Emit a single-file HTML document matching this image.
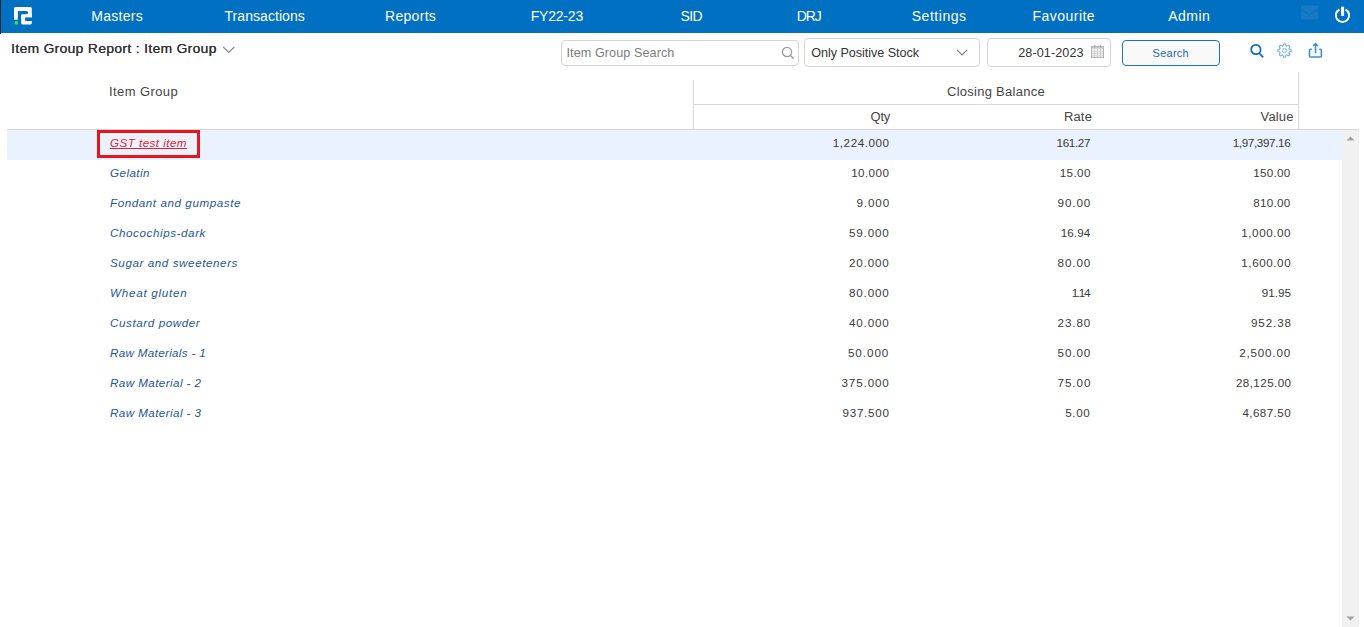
<!DOCTYPE html>
<html><head><meta charset="utf-8">
<style>
*{margin:0;padding:0;box-sizing:border-box}
html,body{width:1364px;height:627px;overflow:hidden;background:#fff;font-family:"Liberation Sans",sans-serif}
.t{position:absolute;white-space:nowrap}
.a{position:absolute}
</style></head><body>
<div class="a" style="left:0;top:0;width:1364px;height:33px;background:#0070c2"></div>
<div class="a" style="left:0;top:0;width:1px;height:34px;background:#23282e"></div>
<svg class="a" style="left:0;top:0" width="40" height="33" viewBox="0 0 40 33">
<rect x="14" y="7.1" width="17.8" height="10.3" rx="1.4" fill="#fff"/>
<rect x="14" y="10" width="3.85" height="9.7" fill="#fff"/>
<rect x="21.1" y="14.3" width="10.7" height="10.2" rx="1.4" fill="#fff"/>
<rect x="21.1" y="14.3" width="10.7" height="5" fill="#fff"/>
<path d="M17.85 10.9 H26.4 a1.7 1.7 0 0 1 0 3.4 H22.4 a1.3 1.3 0 0 0 -1.3 1.3 V25.5 H17.85 Z" fill="#0070c2"/>
<rect x="25.1" y="17.4" width="7.5" height="3.6" fill="#0070c2"/>
<circle cx="16.3" cy="22.8" r="1.9" fill="#3fe040"/>
</svg>
<div class="t" style="top:7.25px;height:18px;line-height:18px;font-size:14px;color:#fff;letter-spacing:0.3px;left:91.2px;">Masters</div>
<div class="t" style="top:7.25px;height:18px;line-height:18px;font-size:14px;color:#fff;letter-spacing:0.055px;left:224.5px;">Transactions</div>
<div class="t" style="top:7.25px;height:18px;line-height:18px;font-size:14px;color:#fff;letter-spacing:0.3px;left:385.0px;">Reports</div>
<div class="t" style="top:7.25px;height:18px;line-height:18px;font-size:14px;color:#fff;letter-spacing:-0.2px;left:530.7px;">FY22-23</div>
<div class="t" style="top:7.25px;height:18px;line-height:18px;font-size:14px;color:#fff;letter-spacing:-0.6px;left:680.6px;">SID</div>
<div class="t" style="top:7.25px;height:18px;line-height:18px;font-size:14px;color:#fff;letter-spacing:-1.15px;left:796.8000000000001px;">DRJ</div>
<div class="t" style="top:7.25px;height:18px;line-height:18px;font-size:14px;color:#fff;letter-spacing:0.543px;left:911.7px;">Settings</div>
<div class="t" style="top:7.25px;height:18px;line-height:18px;font-size:14px;color:#fff;letter-spacing:0.463px;left:1032.6000000000001px;">Favourite</div>
<div class="t" style="top:7.25px;height:18px;line-height:18px;font-size:14px;color:#fff;letter-spacing:0.5px;left:1168.2px;">Admin</div>
<svg class="a" style="left:1300px;top:5px" width="20" height="16" viewBox="0 0 20 16">
<rect x="1" y="0.4" width="17.1" height="14.1" rx="1.2" fill="#1679c6"/>
<path d="M1.2 4 L9.3 10.3 L17.9 4" stroke="#0e72c2" stroke-width="1.3" fill="none"/>
</svg>
<svg class="a" style="left:1332px;top:5px" width="22" height="22" viewBox="0 0 22 22">
<path d="M7.4 4.5 A6.6 6.6 0 1 0 13.6 4.5" stroke="#fff" stroke-width="2" fill="none"/>
<rect x="9" y="1.7" width="3.1" height="9.2" fill="#fff"/>
</svg>
<div class="t" style="top:40.20px;height:17px;line-height:17px;font-size:13px;color:#333;letter-spacing:0.35px;left:10.9px;transform:scaleX(1.06);transform-origin:0 0;text-shadow:0.25px 0 0 #333;">Item Group Report : Item Group</div>
<svg class="a" style="left:222px;top:45px" width="14" height="10" viewBox="0 0 14 10">
<path d="M1.3 2 L6.8 7.5 L12.3 2" stroke="#8a8a8a" stroke-width="1.2" fill="none"/>
</svg>
<div class="a" style="left:561px;top:40px;width:237.5px;height:26px;border:1px solid #d4d4d4;border-radius:4px"></div>
<div class="t" style="top:44.73px;height:16px;line-height:16px;font-size:12.6px;color:#7d7d7d;letter-spacing:0.088px;left:566.5px;">Item Group Search</div>
<svg class="a" style="left:780px;top:45px" width="16" height="16" viewBox="0 0 16 16">
<circle cx="7" cy="7" r="4.6" stroke="#9a9a9a" stroke-width="1.3" fill="none"/>
<path d="M10.3 10.3 L13.5 13.5" stroke="#9a9a9a" stroke-width="1.4"/>
</svg>
<div class="a" style="left:804px;top:38px;width:176px;height:29px;border:1px solid #d4d4d4;border-radius:4px"></div>
<div class="t" style="top:44.73px;height:16px;line-height:16px;font-size:12.6px;color:#333;letter-spacing:-0.039px;left:811.2px;">Only Positive Stock</div>
<svg class="a" style="left:955px;top:47px" width="14" height="10" viewBox="0 0 14 10">
<path d="M2 3 L7 8 L12 3" stroke="#888" stroke-width="1.2" fill="none"/>
</svg>
<div class="a" style="left:987px;top:38px;width:124px;height:29px;border:1px solid #d4d4d4;border-radius:4px"></div>
<div class="t" style="top:44.73px;height:16px;line-height:16px;font-size:12.6px;color:#333;letter-spacing:0.1px;right:280.40px;text-align:right;">28-01-2023</div>
<svg class="a" style="left:1090px;top:44px" width="15" height="15" viewBox="0 0 15 15">
<rect x="1.5" y="2.5" width="12" height="11" fill="#fbfbfb" stroke="#b4b4b4" stroke-width="1"/>
<rect x="1.5" y="2.5" width="12" height="2.2" fill="#c4c4c4"/>
<path d="M2 7.3h11M2 9.6h11M2 11.9h11M4.6 5v8.5M7.5 5v8.5M10.4 5v8.5" stroke="#c9c9c9" stroke-width="0.9"/>
<rect x="4" y="1" width="1.2" height="2.5" fill="#aaa"/><rect x="9.8" y="1" width="1.2" height="2.5" fill="#aaa"/>
</svg>
<div class="a" style="left:1122px;top:40px;width:98px;height:26px;border:1.5px solid #1a72c4;border-radius:4px;background:#f9f9f9"></div>
<div class="t" style="top:45.79px;height:15px;line-height:15px;font-size:11px;color:#2869b3;letter-spacing:0.26px;left:970.8px;width:400px;text-align:center;">Search</div>
<svg class="a" style="left:1248px;top:42px" width="18" height="18" viewBox="0 0 18 18">
<circle cx="7.9" cy="7.5" r="4.7" stroke="#0b6bc0" stroke-width="1.7" fill="none"/>
<path d="M11.2 11 L15.1 15.3" stroke="#0b6bc0" stroke-width="1.8"/>
</svg>
<svg class="a" style="left:1275px;top:41px" width="19" height="19" viewBox="0 0 19 19">
<path id="gear" fill="none" stroke="#78b3e8" stroke-width="1.15" stroke-linejoin="round" d="M7.70 5.16 L8.71 2.80 L10.29 2.80 L11.30 5.16 L13.68 4.20 L14.80 5.32 L13.84 7.70 L16.20 8.71 L16.20 10.29 L13.84 11.30 L14.80 13.68 L13.68 14.80 L11.30 13.84 L10.29 16.20 L8.71 16.20 L7.70 13.84 L5.32 14.80 L4.20 13.68 L5.16 11.30 L2.80 10.29 L2.80 8.71 L5.16 7.70 L4.20 5.32 L5.32 4.20Z"/>
<circle cx="9.5" cy="9.5" r="2.1" stroke="#86bbea" stroke-width="1" fill="none"/>
</svg>
<svg class="a" style="left:1306px;top:41px" width="19" height="19" viewBox="0 0 19 19">
<path d="M5.8 8.2 H4.8 a1.3 1.3 0 0 0 -1.3 1.3 V14.7 a1.3 1.3 0 0 0 1.3 1.3 H14.1 a1.3 1.3 0 0 0 1.3 -1.3 V9.5 a1.3 1.3 0 0 0 -1.3 -1.3 H13.2" stroke="#3d8cd8" stroke-width="1.6" fill="none"/>
<path d="M9.5 12.2 V2.8 M7.1 5 L9.5 2.6 L11.9 5" stroke="#3d8cd8" stroke-width="1.6" fill="none"/>
</svg>
<div class="t" style="top:83.64px;height:16px;line-height:16px;font-size:12px;color:#444;letter-spacing:0.389px;left:108.5px;transform:scaleX(1.08);transform-origin:0 0;">Item Group</div>
<div class="a" style="left:693px;top:80px;width:1px;height:49px;background:#d8d8d8"></div>
<div class="a" style="left:1298px;top:72px;width:1px;height:57px;background:#d8d8d8"></div>
<div class="a" style="left:693px;top:104px;width:605px;height:1px;background:#d8d8d8"></div>
<div class="t" style="top:83.54px;height:16px;line-height:16px;font-size:12px;color:#444;letter-spacing:0.261px;left:796px;width:400px;text-align:center;transform:scaleX(1.08);transform-origin:50% 0;">Closing Balance</div>
<div class="t" style="top:108.64px;height:16px;line-height:16px;font-size:12px;color:#444;letter-spacing:-0.194px;right:474.21px;text-align:right;transform:scaleX(1.08);transform-origin:100% 0;">Qty</div>
<div class="t" style="top:108.64px;height:16px;line-height:16px;font-size:12px;color:#444;letter-spacing:0.179px;right:271.51px;text-align:right;transform:scaleX(1.08);transform-origin:100% 0;">Rate</div>
<div class="t" style="top:108.64px;height:16px;line-height:16px;font-size:12px;color:#444;letter-spacing:0.139px;right:70.35px;text-align:right;transform:scaleX(1.08);transform-origin:100% 0;">Value</div>
<div class="a" style="left:7px;top:129px;width:1352px;height:1px;background:#d6d6d6"></div>
<div class="a" style="left:7px;top:130px;width:1335px;height:30px;background:#e9f2fe"></div>
<div class="a" style="left:97px;top:130px;width:103px;height:28px;border:3px solid #e8141c"></div>
<div class="t" style="top:136.26px;height:14px;line-height:14px;font-size:10.8px;color:#ee1c24;letter-spacing:0.41px;font-style:italic;left:109.5px;transform:scaleX(1.08);transform-origin:0 0;text-decoration:underline;">GST test item</div>
<div class="t" style="top:136.26px;height:14px;line-height:14px;font-size:10.8px;color:#3a3a3a;letter-spacing:0.514px;right:474.64px;text-align:right;transform:scaleX(1.08);transform-origin:100% 0;">1,224.000</div>
<div class="t" style="top:136.26px;height:14px;line-height:14px;font-size:10.8px;color:#3a3a3a;letter-spacing:-0.326px;right:274.15px;text-align:right;transform:scaleX(1.08);transform-origin:100% 0;">161.27</div>
<div class="t" style="top:136.26px;height:14px;line-height:14px;font-size:10.8px;color:#3a3a3a;letter-spacing:-0.341px;right:73.77px;text-align:right;transform:scaleX(1.08);transform-origin:100% 0;">1,97,397.16</div>
<div class="t" style="top:166.26px;height:14px;line-height:14px;font-size:10.8px;color:#1f5896;letter-spacing:0.382px;font-style:italic;left:109.5px;transform:scaleX(1.08);transform-origin:0 0;">Gelatin</div>
<div class="t" style="top:166.26px;height:14px;line-height:14px;font-size:10.8px;color:#3a3a3a;letter-spacing:0.378px;right:474.79px;text-align:right;transform:scaleX(1.08);transform-origin:100% 0;">10.000</div>
<div class="t" style="top:166.26px;height:14px;line-height:14px;font-size:10.8px;color:#3a3a3a;letter-spacing:0.352px;right:273.42px;text-align:right;transform:scaleX(1.08);transform-origin:100% 0;">15.00</div>
<div class="t" style="top:166.26px;height:14px;line-height:14px;font-size:10.8px;color:#3a3a3a;letter-spacing:0.266px;right:73.11px;text-align:right;transform:scaleX(1.08);transform-origin:100% 0;">150.00</div>
<div class="t" style="top:196.26px;height:14px;line-height:14px;font-size:10.8px;color:#1f5896;letter-spacing:0.512px;font-style:italic;left:109.5px;transform:scaleX(1.08);transform-origin:0 0;">Fondant and gumpaste</div>
<div class="t" style="top:196.26px;height:14px;line-height:14px;font-size:10.8px;color:#3a3a3a;letter-spacing:0.796px;right:474.34px;text-align:right;transform:scaleX(1.08);transform-origin:100% 0;">9.000</div>
<div class="t" style="top:196.26px;height:14px;line-height:14px;font-size:10.8px;color:#3a3a3a;letter-spacing:0.843px;right:272.89px;text-align:right;transform:scaleX(1.08);transform-origin:100% 0;">90.00</div>
<div class="t" style="top:196.26px;height:14px;line-height:14px;font-size:10.8px;color:#3a3a3a;letter-spacing:0.252px;right:73.13px;text-align:right;transform:scaleX(1.08);transform-origin:100% 0;">810.00</div>
<div class="t" style="top:226.26px;height:14px;line-height:14px;font-size:10.8px;color:#1f5896;letter-spacing:0.524px;font-style:italic;left:109.5px;transform:scaleX(1.08);transform-origin:0 0;">Chocochips-dark</div>
<div class="t" style="top:226.26px;height:14px;line-height:14px;font-size:10.8px;color:#3a3a3a;letter-spacing:0.77px;right:474.37px;text-align:right;transform:scaleX(1.08);transform-origin:100% 0;">59.000</div>
<div class="t" style="top:226.26px;height:14px;line-height:14px;font-size:10.8px;color:#3a3a3a;letter-spacing:0.028px;right:273.77px;text-align:right;transform:scaleX(1.08);transform-origin:100% 0;">16.94</div>
<div class="t" style="top:226.26px;height:14px;line-height:14px;font-size:10.8px;color:#3a3a3a;letter-spacing:0.492px;right:72.87px;text-align:right;transform:scaleX(1.08);transform-origin:100% 0;">1,000.00</div>
<div class="t" style="top:256.26px;height:14px;line-height:14px;font-size:10.8px;color:#1f5896;letter-spacing:0.525px;font-style:italic;left:109.5px;transform:scaleX(1.08);transform-origin:0 0;">Sugar and sweeteners</div>
<div class="t" style="top:256.26px;height:14px;line-height:14px;font-size:10.8px;color:#3a3a3a;letter-spacing:0.77px;right:474.37px;text-align:right;transform:scaleX(1.08);transform-origin:100% 0;">20.000</div>
<div class="t" style="top:256.26px;height:14px;line-height:14px;font-size:10.8px;color:#3a3a3a;letter-spacing:0.843px;right:272.89px;text-align:right;transform:scaleX(1.08);transform-origin:100% 0;">80.00</div>
<div class="t" style="top:256.26px;height:14px;line-height:14px;font-size:10.8px;color:#3a3a3a;letter-spacing:0.518px;right:72.84px;text-align:right;transform:scaleX(1.08);transform-origin:100% 0;">1,600.00</div>
<div class="t" style="top:286.26px;height:14px;line-height:14px;font-size:10.8px;color:#1f5896;letter-spacing:0.677px;font-style:italic;left:109.5px;transform:scaleX(1.08);transform-origin:0 0;">Wheat gluten</div>
<div class="t" style="top:286.26px;height:14px;line-height:14px;font-size:10.8px;color:#3a3a3a;letter-spacing:0.77px;right:474.37px;text-align:right;transform:scaleX(1.08);transform-origin:100% 0;">80.000</div>
<div class="t" style="top:286.26px;height:14px;line-height:14px;font-size:10.8px;color:#3a3a3a;letter-spacing:-1.235px;right:275.13px;text-align:right;transform:scaleX(1.08);transform-origin:100% 0;">1.14</div>
<div class="t" style="top:286.26px;height:14px;line-height:14px;font-size:10.8px;color:#3a3a3a;letter-spacing:0.009px;right:73.39px;text-align:right;transform:scaleX(1.08);transform-origin:100% 0;">91.95</div>
<div class="t" style="top:316.26px;height:14px;line-height:14px;font-size:10.8px;color:#1f5896;letter-spacing:0.53px;font-style:italic;left:109.5px;transform:scaleX(1.08);transform-origin:0 0;">Custard powder</div>
<div class="t" style="top:316.26px;height:14px;line-height:14px;font-size:10.8px;color:#3a3a3a;letter-spacing:0.77px;right:474.37px;text-align:right;transform:scaleX(1.08);transform-origin:100% 0;">40.000</div>
<div class="t" style="top:316.26px;height:14px;line-height:14px;font-size:10.8px;color:#3a3a3a;letter-spacing:0.843px;right:272.89px;text-align:right;transform:scaleX(1.08);transform-origin:100% 0;">23.80</div>
<div class="t" style="top:316.26px;height:14px;line-height:14px;font-size:10.8px;color:#3a3a3a;letter-spacing:0.808px;right:72.53px;text-align:right;transform:scaleX(1.08);transform-origin:100% 0;">952.38</div>
<div class="t" style="top:346.26px;height:14px;line-height:14px;font-size:10.8px;color:#1f5896;letter-spacing:0.287px;font-style:italic;left:109.5px;transform:scaleX(1.08);transform-origin:0 0;">Raw Materials - 1</div>
<div class="t" style="top:346.26px;height:14px;line-height:14px;font-size:10.8px;color:#3a3a3a;letter-spacing:0.881px;right:474.25px;text-align:right;transform:scaleX(1.08);transform-origin:100% 0;">50.000</div>
<div class="t" style="top:346.26px;height:14px;line-height:14px;font-size:10.8px;color:#3a3a3a;letter-spacing:0.843px;right:272.89px;text-align:right;transform:scaleX(1.08);transform-origin:100% 0;">50.00</div>
<div class="t" style="top:346.26px;height:14px;line-height:14px;font-size:10.8px;color:#3a3a3a;letter-spacing:0.746px;right:72.59px;text-align:right;transform:scaleX(1.08);transform-origin:100% 0;">2,500.00</div>
<div class="t" style="top:376.26px;height:14px;line-height:14px;font-size:10.8px;color:#1f5896;letter-spacing:0.375px;font-style:italic;left:109.5px;transform:scaleX(1.08);transform-origin:0 0;">Raw Material - 2</div>
<div class="t" style="top:376.26px;height:14px;line-height:14px;font-size:10.8px;color:#3a3a3a;letter-spacing:0.815px;right:474.32px;text-align:right;transform:scaleX(1.08);transform-origin:100% 0;">375.000</div>
<div class="t" style="top:376.26px;height:14px;line-height:14px;font-size:10.8px;color:#3a3a3a;letter-spacing:0.888px;right:272.84px;text-align:right;transform:scaleX(1.08);transform-origin:100% 0;">75.00</div>
<div class="t" style="top:376.26px;height:14px;line-height:14px;font-size:10.8px;color:#3a3a3a;letter-spacing:0.388px;right:72.98px;text-align:right;transform:scaleX(1.08);transform-origin:100% 0;">28,125.00</div>
<div class="t" style="top:406.26px;height:14px;line-height:14px;font-size:10.8px;color:#1f5896;letter-spacing:0.375px;font-style:italic;left:109.5px;transform:scaleX(1.08);transform-origin:0 0;">Raw Material - 3</div>
<div class="t" style="top:406.26px;height:14px;line-height:14px;font-size:10.8px;color:#3a3a3a;letter-spacing:0.66px;right:474.49px;text-align:right;transform:scaleX(1.08);transform-origin:100% 0;">937.500</div>
<div class="t" style="top:406.26px;height:14px;line-height:14px;font-size:10.8px;color:#3a3a3a;letter-spacing:0.592px;right:273.16px;text-align:right;transform:scaleX(1.08);transform-origin:100% 0;">5.00</div>
<div class="t" style="top:406.26px;height:14px;line-height:14px;font-size:10.8px;color:#3a3a3a;letter-spacing:0.375px;right:73.00px;text-align:right;transform:scaleX(1.08);transform-origin:100% 0;">4,687.50</div>
<div class="a" style="left:1342px;top:130px;width:17px;height:497px;background:#f1f1f1"></div>
<svg class="a" style="left:1342px;top:130px" width="17" height="17" viewBox="0 0 17 17"><path d="M4.5 10.5 L8.5 6.5 L12.5 10.5Z" fill="#a3a3a3"/></svg>
<svg class="a" style="left:1342px;top:610px" width="17" height="17" viewBox="0 0 17 17"><path d="M4.5 6.5 L8.5 10.5 L12.5 6.5Z" fill="#a3a3a3"/></svg>
</body></html>
